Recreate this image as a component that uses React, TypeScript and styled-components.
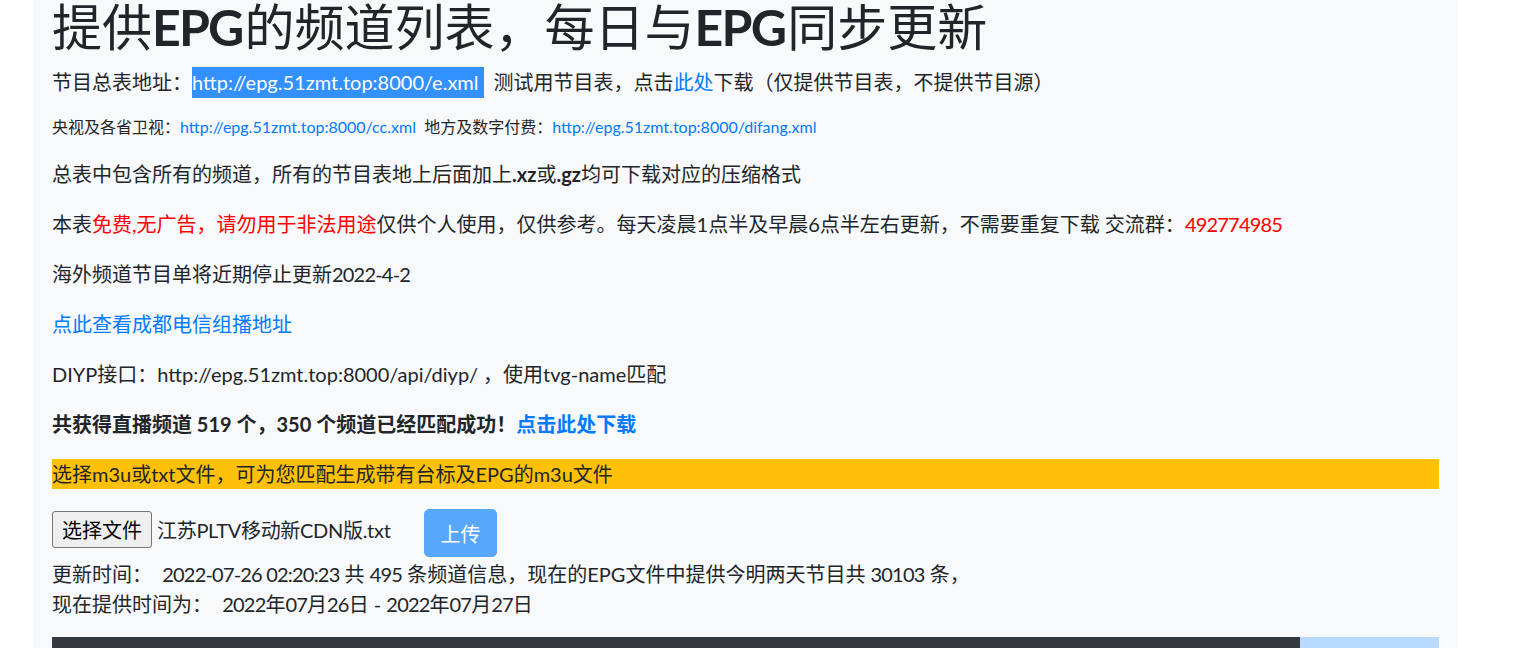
import React from "react";
import styled, { createGlobalStyle } from "styled-components";

const GlobalStyle = createGlobalStyle`
  html, body { margin: 0; padding: 0; background: #ffffff; }
  body {
    font-family: "Lato", "Noto Sans CJK SC", sans-serif;
    font-size: 20px;
    line-height: 1.5;
    color: #212529;
    overflow: hidden;
  }
  * { box-sizing: border-box; }
`;

const Container = styled.div`
  margin-left: 33px;
  width: 1425px;
  min-height: 648px;
  padding: 0 19px;
  background: #f8f9fa;
`;

const Title = styled.h1`
  margin: 0 0 15px;
  padding-top: 2px;
  font-size: 50px;
  line-height: 50px;
  height: 52px;
  font-weight: 400;
  white-space: nowrap;
`;

const Latin = styled.span`
  font-weight: 700;
  letter-spacing: -1.8px;
  margin-right: 2px;
`;

const Num = styled.span`
  letter-spacing: -0.8px;
`;

const Line = styled.div`
  line-height: 30px;
  white-space: nowrap;
`;

const Para = styled.p<{ $small?: boolean; $bold?: boolean }>`
  margin: ${(p) => (p.$small ? "17px 0 20px" : "0 0 20px")};
  font-size: ${(p) => (p.$small ? "16px" : "20px")};
  line-height: ${(p) => (p.$small ? "24px" : "30px")};
  font-weight: ${(p) => (p.$bold ? 700 : 400)};
  white-space: nowrap;
`;

const Selected = styled.span`
  background: #3390ff;
  color: #ffffff;
  padding: 0 5px 0 0;
  margin-right: 10px;
  display: inline-block;
  line-height: 31px;
`;

const Link = styled.a`
  color: #007bff;
  text-decoration: none;
`;

const Red = styled.span`
  color: #ff0000;
`;

const Notice = styled.div`
  background: #ffc107;
  line-height: 30px;
  color: #212529;
`;

const UploadRow = styled.div`
  display: flex;
  align-items: flex-start;
  margin-top: 20px;
  height: 50px;
`;

const FileField = styled.div`
  width: 372px;
  display: flex;
  align-items: center;
  gap: 5px;
  margin-top: 2px;
`;

const FileButton = styled.button`
  width: 100px;
  height: 37px;
  padding: 0;
  font-family: inherit;
  font-size: 20px;
  color: #000;
  background: #efefef;
  border: 1px solid #767676;
  border-radius: 3px;
`;

const FileName = styled.span`
  font-size: 20px;
  white-space: nowrap;
  letter-spacing: -0.3px;
`;

const UploadButton = styled.button`
  width: 73px;
  height: 48px;
  padding: 0;
  font-family: inherit;
  font-size: 20px;
  color: #fdfeff;
  background: #57a7fd;
  border: 1px solid #57a7fd;
  border-radius: 5px;
`;

const Info = styled.div`
  line-height: 30px;
  white-space: nowrap;
`;

const Table = styled.table`
  width: 100%;
  margin-top: 18px;
  border-collapse: collapse;
`;

const Th = styled.th<{ $accent?: boolean }>`
  background: ${(p) => (p.$accent ? "#b8daff" : "#343a40")};
  color: ${(p) => (p.$accent ? "#212529" : "#ffffff")};
  width: ${(p) => (p.$accent ? "139px" : "auto")};
  padding: 16px 15px 15px;
  text-align: left;
  font-size: 20px;
`;

export default function App() {
  return (
    <>
      <GlobalStyle />
      <Container>
        <Title>
          提供<Latin>EPG</Latin>的频道列表，每日与<Latin>EPG</Latin>同步更新
        </Title>
        <Line>
          节目总表地址：<Selected>http://epg.51zmt.top:8000/e.xml</Selected>测试用节目表，点击
          <Link href="#">此处</Link>下载（仅提供节目表，不提供节目源）
        </Line>
        <Para $small>
          央视及各省卫视：<Link href="#">http://epg.51zmt.top:8000/cc.xml</Link>&nbsp;&nbsp;地方及数字付费：
          <Link href="#">http://epg.51zmt.top:8000/difang.xml</Link>
        </Para>
        <Para>
          总表中包含所有的频道，所有的节目表地上后面加上<b>.xz</b>或<b>.gz</b>均可下载对应的压缩格式
        </Para>
        <Para>
          本表<Red>免费,无广告，请勿用于非法用途</Red>仅供个人使用，仅供参考。每天凌晨1点半及早晨6点半左右更新，不需要重复下载 交流群：
          <Red>
            <Num>492774985</Num>
          </Red>
        </Para>
        <Para>
          海外频道节目单将近期停止更新<Num>2022-4-2</Num>
        </Para>
        <Para>
          <Link href="#">点此查看成都电信组播地址</Link>
        </Para>
        <Para>DIYP接口：http://epg.51zmt.top:8000/api/diyp/ ，使用tvg-name匹配</Para>
        <Para $bold>
          共获得直播频道 519 个，350 个频道已经匹配成功！<Link href="#">点击此处下载</Link>
        </Para>
        <Notice>选择m3u或txt文件，可为您匹配生成带有台标及EPG的m3u文件</Notice>
        <UploadRow>
          <FileField>
            <FileButton type="button">选择文件</FileButton>
            <FileName>江苏PLTV移动新CDN版.txt</FileName>
          </FileField>
          <UploadButton type="button">上传</UploadButton>
        </UploadRow>
        <Info>
          更新时间：&nbsp;&nbsp;<Num>2022-07-26 02:20:23</Num> 共 <Num>495</Num> 条频道信息，现在的EPG文件中提供今明两天节目共{" "}
          <Num>30103</Num> 条，
        </Info>
        <Info>
          现在提供时间为：&nbsp;&nbsp;<Num>2022</Num>年<Num>07</Num>月<Num>26</Num>日 - <Num>2022</Num>年<Num>07</Num>月
          <Num>27</Num>日
        </Info>
        <Table>
          <thead>
            <tr>
              <Th>频道名称</Th>
              <Th $accent>匹配</Th>
            </tr>
          </thead>
        </Table>
      </Container>
    </>
  );
}
